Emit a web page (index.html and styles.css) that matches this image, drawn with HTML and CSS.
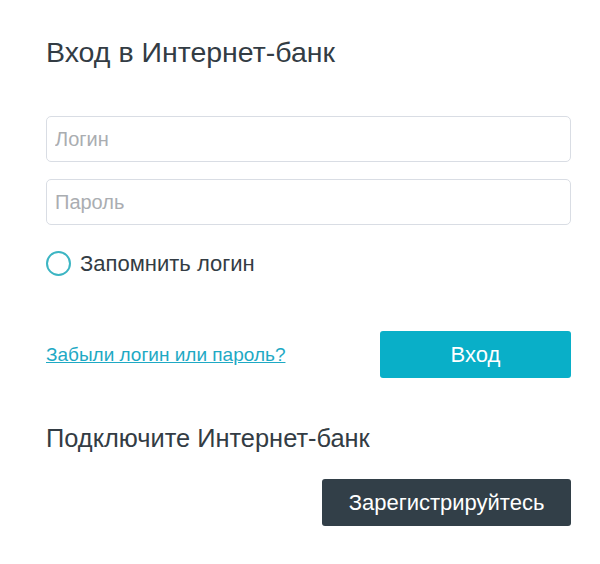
FILE: index.html
```html
<!DOCTYPE html>
<html lang="ru">
<head>
	<meta charset="UTF-8">
	<title>Вход в Интернет-банк</title>
	<link rel="stylesheet" href="styles.css">
</head>
<body>
	<section class="login">

		<h1 class="title">Вход в Интернет-банк</h1>

		<form class="form">
			<input class="field" type="text" placeholder="Логин">
			<input class="field" type="password" placeholder="Пароль">

			<label class="remember">
				<span class="radio"></span>
				Запомнить логин
			</label>

			<div class="actions">
				<a href="#" class="forgot">Забыли логин или пароль?</a>
				<button type="button" class="btn btn-enter">Вход</button>
			</div>
		</form>

		<h2 class="subtitle">Подключите Интернет-банк</h2>

		<div class="register">
			<button type="button" class="btn btn-register">Зарегистрируйтесь</button>
		</div>

	</section>
</body>
</html>
```

FILE: styles.css
```css
* {
	box-sizing: border-box;
}

body {
	margin: 0;
	background: #fff;
	font-family: "Liberation Sans", Arial, sans-serif;
	color: #333c44;
}

.login {
	padding: 36px 29px 0 46px;
}

.title {
	margin: 0 0 48px;
	font-size: 28.5px;
	font-weight: 400;
	line-height: 32px;
	color: #333c44;
}

.form {
	display: flex;
	flex-direction: column;
}

.field {
	height: 46px;
	margin-bottom: 17px;
	padding: 0 8px;
	border: 1px solid #d9dde4;
	border-radius: 5px;
	font-family: inherit;
	font-size: 20px;
	color: #333c44;
	outline: none;
}

.field::placeholder {
	color: #aaadb1;
}

.remember {
	display: flex;
	align-items: center;
	gap: 9px;
	margin-top: 9px;
	font-size: 22px;
	line-height: 24px;
}

.radio {
	width: 25px;
	height: 25px;
	border: 2px solid #3cb5c3;
	border-radius: 50%;
}

.actions {
	display: flex;
	justify-content: space-between;
	align-items: center;
	margin-top: 55px;
}

.forgot {
	font-size: 19px;
	color: #1ea9c4;
}

.btn {
	height: 47px;
	border: 0;
	border-radius: 3px;
	color: #fff;
	font-family: inherit;
	font-size: 22px;
}

.btn-enter {
	width: 191px;
	background-color: #09afc8;
}

.subtitle {
	margin: 46px 0 0;
	font-size: 25.4px;
	font-weight: 400;
	line-height: 28px;
	color: #333c44;
}

.register {
	display: flex;
	justify-content: flex-end;
	margin-top: 27px;
}

.btn-register {
	width: 249px;
	background-color: #323f48;
}
```
